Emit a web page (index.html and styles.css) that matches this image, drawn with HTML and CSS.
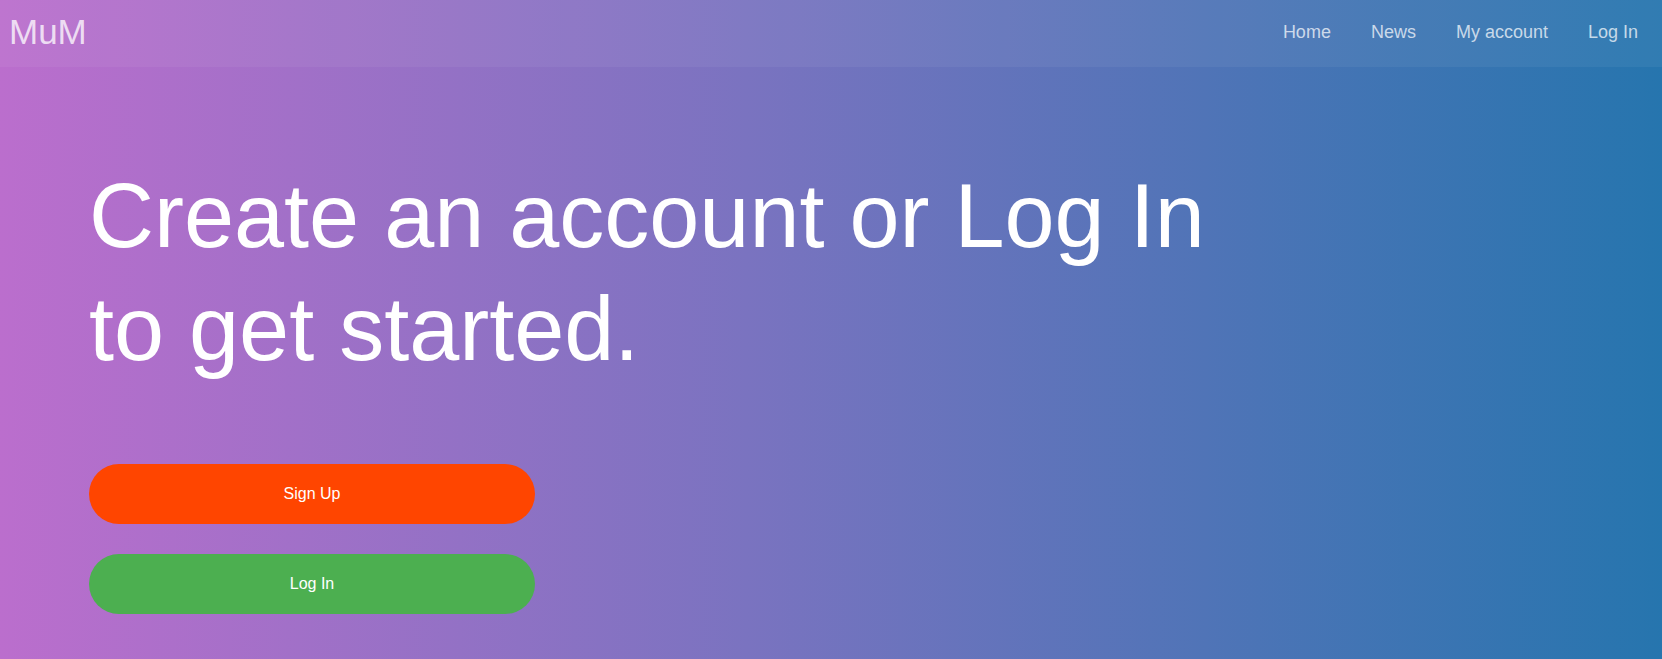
FILE: index.html
```html
<!DOCTYPE html>
<html>
<head>
<meta charset="utf-8">
<link rel="stylesheet" href="styles.css">
</head>
<body>
<div class="page">
  <header class="topbar">
    <div class="brand">MuM</div>
    <nav class="nav">
      <a href="#">Home</a>
      <a href="#">News</a>
      <a href="#">My account</a>
      <a href="#">Log In</a>
    </nav>
  </header>
  <main class="hero">
    <h1 class="headline">Create an account or Log In to get started.</h1>
    <div class="actions">
      <button class="btn btn-signup">Sign Up</button>
      <button class="btn btn-login">Log In</button>
    </div>
  </main>
</div>
</body>
</html>
```

FILE: styles.css
```css
html, body {
  margin: 0;
  padding: 0;
  height: 100%;
}
body {
  font-family: "Liberation Sans", Arial, sans-serif;
  background: linear-gradient(to right, #bb6ecd 0%, #7a73c0 45%, #2675ae 100%);
  color: #fff;
  overflow: hidden;
}
.page {
  min-height: 659px;
}
.topbar {
  height: 67px;
  display: flex;
  align-items: center;
  justify-content: space-between;
  padding: 0 24px 0 9px;
  background: rgba(255, 255, 255, 0.05);
}
.brand {
  font-size: 35px;
  color: rgba(255, 255, 255, 0.75);
  margin-top: -4px;
}
.nav {
  display: flex;
  gap: 40px;
  margin-top: -3px;
}
.nav a {
  color: rgba(255, 255, 255, 0.72);
  text-decoration: none;
  font-size: 18px;
}
.hero {
  padding: 93px 0 0 89px;
}
.headline {
  margin: 0;
  width: 1160px;
  font-weight: normal;
  font-size: 90px;
  line-height: 113px;
}
.actions {
  display: flex;
  flex-direction: column;
  gap: 30px;
  margin-top: 78px;
}
.btn {
  width: 446px;
  height: 60px;
  border: none;
  border-radius: 30px;
  color: #fff;
  font-family: "Liberation Sans", Arial, sans-serif;
  font-size: 16px;
  padding: 0;
}
.btn-signup {
  background: #ff4500;
}
.btn-login {
  background: #4caf50;
}
```
